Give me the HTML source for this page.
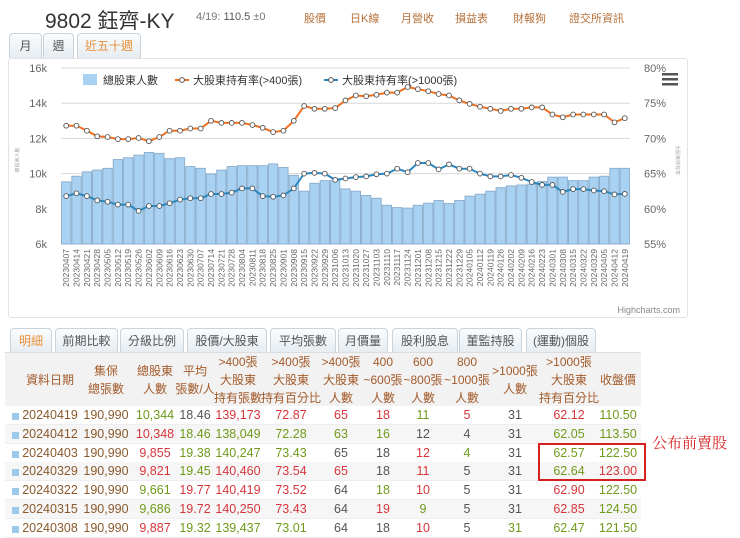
<!DOCTYPE html>
<html><head><meta charset="utf-8">
<style>
*{margin:0;padding:0;box-sizing:border-box}
body{width:740px;height:534px;background:#fff;font-family:"Liberation Sans","Noto Sans CJK TC",sans-serif;position:relative;overflow:hidden;color:#555}
.a{position:absolute;white-space:nowrap}
.tab{position:absolute;border:1px solid #c9d3dc;border-bottom:none;border-radius:4px 4px 0 0;background:linear-gradient(#fafcfd,#e6ecf1);font-size:12px;color:#555;text-align:center}
.c{position:absolute;transform:translateX(-50%);white-space:nowrap;font-size:12.5px}
.h{position:absolute;transform:translateX(-50%);white-space:nowrap;font-size:12px;color:#a35a2a;text-align:center;line-height:18px}
.r{color:#d6363c}.g{color:#6f9a1a}.k{color:#555}.b{color:#8a5a2c}
</style></head><body>
<div class="a" style="left:45px;top:5px;font-size:21px;color:#333">9802 鈺齊-KY</div>
<div class="a" style="left:196px;top:11px;font-size:11px;color:#777">4/19: <span style="color:#555">110.5</span> ±0</div>
<div class="a" style="left:304px;top:10px;font-size:11px;color:#b5703a">股價</div>
<div class="a" style="left:350px;top:10px;font-size:11px;color:#b5703a">日K線</div>
<div class="a" style="left:401px;top:10px;font-size:11px;color:#b5703a">月營收</div>
<div class="a" style="left:455px;top:10px;font-size:11px;color:#b5703a">損益表</div>
<div class="a" style="left:513px;top:10px;font-size:11px;color:#b5703a">財報狗</div>
<div class="a" style="left:569px;top:10px;font-size:11px;color:#b5703a">證交所資訊</div>

<div class="tab" style="left:9px;top:33px;width:33px;height:25px;line-height:24px">月</div>
<div class="tab" style="left:43px;top:33px;width:31px;height:25px;line-height:24px">週</div>
<div class="tab" style="left:77px;top:33px;width:64px;height:25px;line-height:24px;color:#e8903a">近五十週</div>

<div class="a" style="left:8px;top:58px;width:680px;height:260px;border:1px solid #e3e3e3;border-radius:3px"></div>
<svg id="ch" class="a" style="left:0;top:0" width="740" height="320"></svg>

<div id="tabs2"></div>
<div class="a" style="left:5px;top:352px;width:636px;height:54px;background:#f2f2f2;border-top:1px solid #ddd"></div>
<div id="tbl"></div>
<div class="a" style="left:538px;top:443px;width:108px;height:38px;border:2px solid #d42020"></div>
<div class="a" style="left:652px;top:432px;font-size:15px;color:#d42020;font-family:'Liberation Serif','Noto Serif CJK SC',serif">公布前賣股</div>

<script>
var bars=[9.53,9.85,10.1,10.2,10.3,10.8,10.9,11.05,11.2,11.15,10.85,10.9,10.4,10.3,9.98,10.2,10.4,10.45,10.45,10.45,10.55,10.35,9.9,9.0,9.45,9.6,9.6,9.13,9.0,8.76,8.6,8.2,8.07,8.04,8.2,8.32,8.47,8.3,8.47,8.72,8.83,9.0,9.2,9.3,9.35,9.4,9.55,9.8,9.8,9.6,9.6,9.8,9.85,10.3,10.3];
var o=[71.8,71.8,71.1,70.3,70.2,69.9,69.9,70.05,69.6,70.2,71.1,71.1,71.4,71.4,72.5,72.2,72.2,72.2,71.9,71.5,70.9,71.1,72.5,74.6,74.2,74.2,74.3,75.4,76.1,76,76.2,76.5,76.5,77.3,77,76.7,76.3,76.1,75.4,74.9,74.5,74.2,73.9,74.2,74.2,74.4,74.4,73.4,73,73.4,73.4,73.4,73.4,72.28,72.87];
var bl=[61.8,62.2,61.8,61.2,61,60.6,60.6,59.7,60.4,60.4,60.8,61.3,61.5,61.5,62.1,62.1,62.3,62.9,62.9,61.8,61.7,61.9,62.9,65,65.1,65,64.1,64.3,64.5,64.6,64.9,65,65.7,65.2,66.5,66.5,65.6,66.3,65.7,65.7,65,64.6,64.6,64.8,64.4,63.8,63.4,63.4,62.4,62.8,62.8,62.6,62.5,62.05,62.12];
var L=61,R=630,T=68,B=244,n=55,w=(R-L)/n,s='';
function yk(v){return B-(v-6)/10*(B-T)}function yp(v){return B-(v-55)/25*(B-T)}
for(var k=0;k<=5;k++){var y=T+k*(B-T)/5;s+='<line x1="'+L+'" x2="'+R+'" y1="'+y+'" y2="'+y+'" stroke="#d8d8d8"/>';
s+='<text x="47" y="'+(y+4)+'" font-size="11" fill="#666" text-anchor="end">'+(16-2*k)+'k</text>';
s+='<text x="644" y="'+(y+4)+'" font-size="11" fill="#666">'+(80-5*k)+'%</text>';}
var d=new Date(2023,3,7);
for(var i=0;i<n;i++){var x=L+i*w,y=yk(bars[i]);s+='<rect x="'+(x+0.5)+'" y="'+y+'" width="'+(w-1)+'" height="'+(B-y)+'" fill="#a8d1f2" stroke="#8aaccb" stroke-width="0.9"/>';
var dd=new Date(d.getTime()+i*7*864e5),t=''+dd.getFullYear()+('0'+(dd.getMonth()+1)).slice(-2)+('0'+dd.getDate()).slice(-2);
var cx=L+(i+0.5)*w;s+='<text transform="translate('+(cx+3)+',249) rotate(-90)" font-size="8.5" fill="#666" text-anchor="end">'+t+'</text>';}
function line(a,c){var p='';for(var i=0;i<n;i++)p+=(i?'L':'M')+(L+(i+0.5)*w).toFixed(1)+' '+yp(a[i]).toFixed(1);s+='<path d="'+p+'" fill="none" stroke="'+c+'" stroke-width="2"/>';
for(var i=0;i<n;i++)s+='<circle cx="'+(L+(i+0.5)*w).toFixed(1)+'" cy="'+yp(a[i]).toFixed(1)+'" r="2.4" fill="#fff" stroke="#555" stroke-width="0.9"/>';}
line(bl,'#2a88c0');line(o,'#f07020');
s+='<rect x="83" y="74" width="14" height="11" fill="#a8d1f2"/><text x="103" y="84" font-size="11" fill="#333">總股東人數</text>';
s+='<line x1="175" x2="189" y1="80" y2="80" stroke="#f07020" stroke-width="2"/><circle cx="182" cy="80" r="2.4" fill="#fff" stroke="#555"/><text x="193" y="84" font-size="11" fill="#333">大股東持有率(&gt;400張)</text>';
s+='<line x1="324" x2="338" y1="80" y2="80" stroke="#2a88c0" stroke-width="2"/><circle cx="331" cy="80" r="2.4" fill="#fff" stroke="#555"/><text x="342" y="84" font-size="11" fill="#333">大股東持有率(&gt;1000張)</text>';
s+='<rect x="662" y="73" width="16" height="2.5" fill="#555"/><rect x="662" y="78" width="16" height="2.5" fill="#555"/><rect x="662" y="83" width="16" height="2.5" fill="#555"/>';
s+='<text x="680" y="313" font-size="9" fill="#888" text-anchor="end">Highcharts.com</text>';
s+='<text transform="translate(19,160) rotate(-90)" font-size="5" fill="#aaa" text-anchor="middle">總股東人數</text><text transform="translate(676,160) rotate(90)" font-size="5" fill="#aaa" text-anchor="middle">大股東持有率</text>';
document.getElementById('ch').innerHTML=s;

var tb=[['明細',10,42],['前期比較',55,63],['分級比例',120,64],['股價/大股東',187,80],['平均張數',270,66],['月價量',338,50],['股利股息',392,66],['董監持股',459,63],['(運動)個股',526,70]],h='';
tb.forEach(function(t,i){h+='<div class="tab" style="left:'+t[1]+'px;top:328px;width:'+t[2]+'px;height:25px;line-height:24px;'+(i?'':'color:#e8903a')+'">'+t[0]+'</div>'});
document.getElementById('tabs2').innerHTML=h;

var cx=[50,106,155,195,238,291,341,383,423,467,515,569,618];
var hd=[['資料日期'],['集保','總張數'],['總股東','人數'],['平均','張數/人'],['&gt;400張','大股東','持有張數'],['&gt;400張','大股東','持有百分比'],['&gt;400張','大股東','人數'],['400','~600張','人數'],['600','~800張','人數'],['800','~1000張','人數'],['&gt;1000張','人數'],['&gt;1000張','大股東','持有百分比'],['收盤價']];
h='';hd.forEach(function(c,i){var top=c.length==3?353:(c.length==2?362:371);h+='<div class="h" style="left:'+cx[i]+'px;top:'+top+'px">'+c.join('<br>')+'</div>'});
var rows=[
['20240419','190,990','g10,344','k18.46','r139,173','r72.87','r65','r18','g11','r5','k31','r62.12','g110.50'],
['20240412','190,990','r10,348','g18.46','g138,049','g72.28','g63','g16','k12','k4','k31','g62.05','g113.50'],
['20240403','190,990','r9,855','g19.38','g140,247','g73.43','k65','k18','r12','g4','k31','g62.57','g122.50'],
['20240329','190,990','r9,821','g19.45','r140,460','r73.54','r65','k18','r11','k5','k31','g62.64','r123.00'],
['20240322','190,990','g9,661','r19.77','r140,419','r73.52','k64','g18','r10','k5','k31','r62.90','g122.50'],
['20240315','190,990','g9,686','r19.72','r140,250','r73.43','k64','r19','g9','k5','k31','r62.85','g124.50'],
['20240308','190,990','r9,887','g19.32','g139,437','g73.01','k64','k18','r10','k5','g31','g62.47','g121.50']];
rows.forEach(function(r,j){var y=406+j*18.8;
h+='<div class="a" style="left:5px;top:'+y+'px;width:636px;height:19px;background:'+(j%2?'#f6f6f6':'#fff')+';border-bottom:1px solid #eee"></div>';
h+='<div class="a" style="left:12px;top:'+(y+7)+'px;width:7px;height:7px;background:#9cc8ea"></div>';
r.forEach(function(v,i){var cl='b',t=v;if(i>1){cl=v[0];t=v.slice(1)}h+='<div class="c '+cl+'" style="left:'+cx[i]+'px;top:'+(y+2)+'px">'+t+'</div>'});});
document.getElementById('tbl').innerHTML=h;
</script>
</body></html>
